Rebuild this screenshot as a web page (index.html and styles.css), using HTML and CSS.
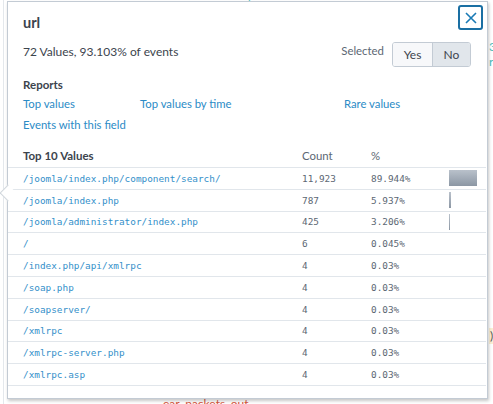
FILE: index.html
```html
<!DOCTYPE html>
<html>
<head>
<meta charset="utf-8">
<link rel="stylesheet" href="styles.css">
</head>
<body>
<div class="bg">
  <div class="bg-gutter"></div>
  <div class="bg-main">
    <div class="bg-top">host &nbsp;&nbsp; nfs_server_fqdn_name</div>
    <div class="bg-bottom">ear_packets_out</div>
  </div>
  <div class="bg-right">
    <div class="bg-r1">3</div>
    <div class="bg-r2">r</div>
    <div class="bg-chip">)</div>
  </div>
</div>

<div class="popover">
  <div class="arrow"></div>
  <div class="pop-head">
    <div class="title">url</div>
    <button class="close" aria-label="Close">
      <svg width="12" height="12" viewBox="0 0 12 12"><path d="M1 1 L11 11 M11 1 L1 11" stroke="#1a7ab5" stroke-width="1.6" fill="none"/></svg>
    </button>
  </div>
  <div class="summary">
    <div class="summary-text">72 Values, 93.103% of events</div>
    <div class="selected">
      <span class="selected-label">Selected</span>
      <div class="toggle">
        <span class="toggle-btn">Yes</span>
        <span class="toggle-btn active">No</span>
      </div>
    </div>
  </div>
  <div class="reports">
    <div class="reports-title">Reports</div>
    <div class="links">
      <a class="link">Top values</a>
      <a class="link">Top values by time</a>
      <a class="link">Rare values</a>
      <a class="link span">Events with this field</a>
    </div>
  </div>
  <div class="table">
    <div class="row head">
      <div class="c-val">Top 10 Values</div>
      <div class="c-cnt">Count</div>
      <div class="c-pct">%</div>
      <div class="c-bar"></div>
    </div>
    <div class="row"><div class="c-val mono">/joomla/index.php/component/search/</div><div class="c-cnt mono">11,923</div><div class="c-pct mono">89.944%</div><div class="c-bar"><div class="bar" style="width:89.944%"></div></div></div>
    <div class="row"><div class="c-val mono">/joomla/index.php</div><div class="c-cnt mono">787</div><div class="c-pct mono">5.937%</div><div class="c-bar"><div class="bar" style="width:5.937%"></div></div></div>
    <div class="row"><div class="c-val mono">/joomla/administrator/index.php</div><div class="c-cnt mono">425</div><div class="c-pct mono">3.206%</div><div class="c-bar"><div class="bar" style="width:3.206%"></div></div></div>
    <div class="row"><div class="c-val mono">/</div><div class="c-cnt mono">6</div><div class="c-pct mono">0.045%</div><div class="c-bar"></div></div>
    <div class="row"><div class="c-val mono">/index.php/api/xmlrpc</div><div class="c-cnt mono">4</div><div class="c-pct mono">0.03%</div><div class="c-bar"></div></div>
    <div class="row"><div class="c-val mono">/soap.php</div><div class="c-cnt mono">4</div><div class="c-pct mono">0.03%</div><div class="c-bar"></div></div>
    <div class="row"><div class="c-val mono">/soapserver/</div><div class="c-cnt mono">4</div><div class="c-pct mono">0.03%</div><div class="c-bar"></div></div>
    <div class="row"><div class="c-val mono">/xmlrpc</div><div class="c-cnt mono">4</div><div class="c-pct mono">0.03%</div><div class="c-bar"></div></div>
    <div class="row"><div class="c-val mono">/xmlrpc-server.php</div><div class="c-cnt mono">4</div><div class="c-pct mono">0.03%</div><div class="c-bar"></div></div>
    <div class="row"><div class="c-val mono">/xmlrpc.asp</div><div class="c-cnt mono">4</div><div class="c-pct mono">0.03%</div><div class="c-bar"></div></div>
  </div>
</div>
</body>
</html>
```

FILE: styles.css
```css
* { box-sizing: border-box; }
html, body { margin: 0; padding: 0; }
body {
  width: 493px;
  height: 404px;
  overflow: hidden;
  position: relative;
  background: #ffffff;
  font-family: "Lato", "Liberation Sans", sans-serif;
  font-size: 12px;
  color: #3c444d;
}

/* background page */
.bg {
  display: grid;
  grid-template-columns: 4px 484px 1fr;
  height: 404px;
}
.bg-gutter { border-right: 1px solid #e4e8ec; }
.bg-main {
  display: flex;
  flex-direction: column;
  overflow: hidden;
}
.bg-top {
  margin-top: -10px;
  padding-left: 141px;
  color: #4fbfbf;
  font-size: 12px;
  line-height: 12px;
}
.bg-bottom {
  margin-top: auto;
  padding-left: 159px;
  color: #d6563c;
  font-size: 12px;
  line-height: 12px;
  margin-bottom: -6px;
}
.bg-right {
  display: flex;
  flex-direction: column;
  padding-left: 1px;
  color: #4fbfbf;
  font-size: 12px;
  overflow: hidden;
}
.bg-r1 { margin-top: 40px; line-height: 14px; }
.bg-r2 { margin-top: 1px; line-height: 14px; }
.bg-chip {
  margin-top: 259px;
  height: 16px;
  background: #fbefd5;
  color: #555;
  line-height: 16px;
  padding-left: 1px;
}

/* popover */
.popover {
  position: absolute;
  left: 7px;
  top: 1px;
  width: 481px;
  height: 398px;
  background: #fff;
  border: 1px solid #c3cbd4;
  box-shadow: 1px 2px 3px rgba(0, 0, 0, 0.22);
  display: flex;
  flex-direction: column;
}
.arrow {
  position: absolute;
  left: -6px;
  top: 185px;
  width: 12px;
  height: 12px;
  background: #fff;
  border-left: 1px solid #d0d6dc;
  border-bottom: 1px solid #d0d6dc;
  transform: rotate(45deg);
}

.pop-head {
  display: flex;
  justify-content: space-between;
  align-items: flex-start;
  height: 34px;
  padding: 3px 4px 0 15px;
}
.title {
  margin-top: 9px;
  font-size: 14.5px;
  font-weight: 700;
  line-height: 18px;
  color: #3c444d;
}
.close {
  width: 25px;
  height: 25px;
  padding: 0;
  margin: 0;
  border: 2px solid #1a6fa3;
  border-radius: 3px;
  background: #fff;
  display: flex;
  align-items: center;
  justify-content: center;
}

.summary {
  display: flex;
  justify-content: space-between;
  align-items: flex-start;
  margin-top: 6px;
  padding: 0 16px 0 15px;
}
.summary-text {
  line-height: 20px;
}
.selected {
  display: flex;
  align-items: flex-start;
  gap: 8px;
}
.selected-label {
  color: #5c6773;
  font-size: 11.4px;
  line-height: 18px;
}
.toggle {
  display: flex;
  height: 25px;
  border: 1px solid #c3cbd4;
  border-radius: 3px;
  overflow: hidden;
}
.toggle-btn {
  display: flex;
  align-items: center;
  justify-content: center;
  width: 39px;
  background: #f7f8fa;
  color: #3c444d;
}
.toggle-btn + .toggle-btn { border-left: 1px solid #c3cbd4; width: 38px; }
.toggle-btn.active { background: #e1e6eb; }

.reports {
  margin-top: 10px;
  padding-left: 15px;
}
.reports-title {
  font-weight: 700;
  font-size: 11.5px;
  line-height: 16px;
}
.links {
  display: grid;
  grid-template-columns: 117px 204px 1fr;
  grid-auto-rows: 21px;
  align-items: center;
}
.link {
  color: #2b8bc6;
  font-size: 11.3px;
  cursor: pointer;
}
.link.span { grid-column: 1 / 3; }

.table {
  margin-top: 9px;
  padding-right: 1px;
}
.row {
  display: grid;
  grid-template-columns: 279px 69px 78px 31px;
  align-items: center;
  height: 21.8px;
  padding-left: 15px;
  border-bottom: 1px solid #e1e6eb;
}
.row.head {
  height: 24px;
}
.row.head .c-val { font-weight: 700; font-size: 11.5px; }
.row.head .c-cnt, .row.head .c-pct { color: #5c6773; font-size: 11.4px; }
.mono {
  font-family: "DejaVu Sans Mono", "Liberation Mono", monospace;
  font-size: 9.4px;
}
.c-val.mono { color: #3490ca; }
.c-cnt.mono, .c-pct.mono { color: #5c6773; }
.c-bar { height: 16px; }
.bar {
  height: 16px;
  background: linear-gradient(#b9c1cb, #8c97a4);
}
```
